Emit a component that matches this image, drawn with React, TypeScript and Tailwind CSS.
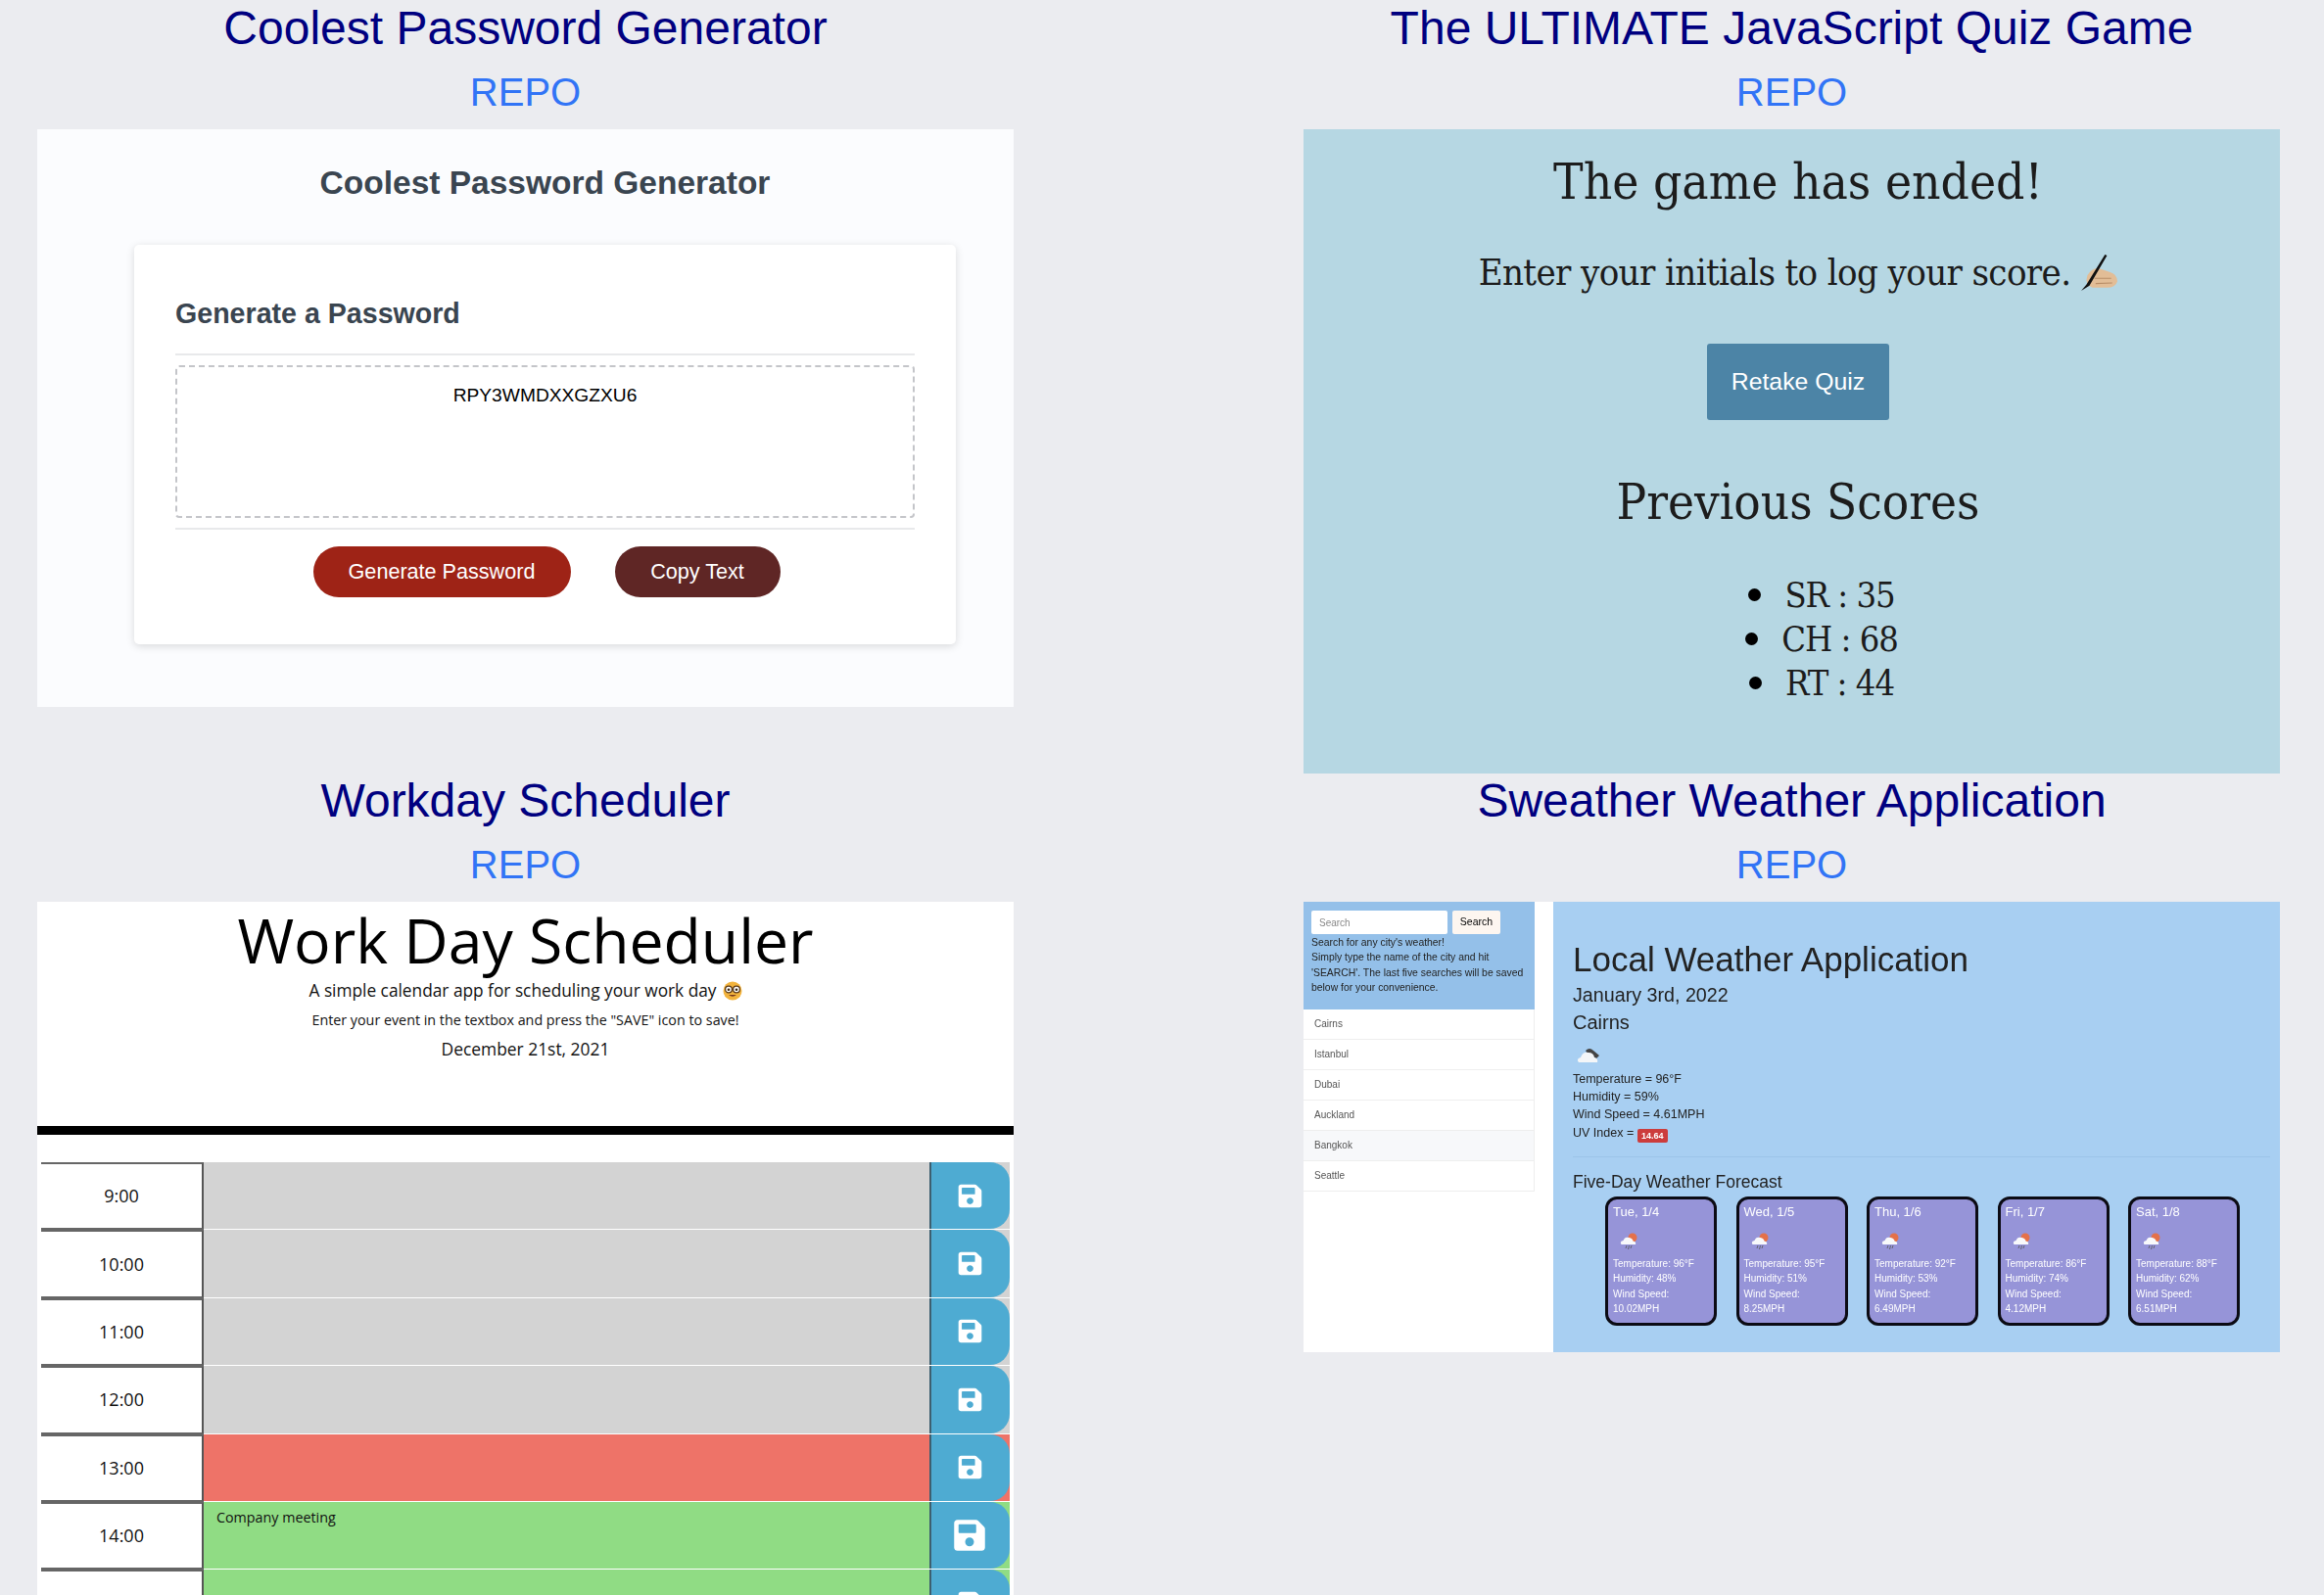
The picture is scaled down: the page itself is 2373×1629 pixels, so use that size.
import { FaSave } from 'react-icons/fa';

const SANS = "font-['Liberation_Sans',Arial,sans-serif]";

function Heading({ title }: { title: string }) {
  return (
    <>
      <h2 className="h-[55px] pt-[1px] text-center text-[48px] leading-[55px] text-[#000080]">{title}</h2>
      <a href="#" className="block h-[77px] pt-[15px] text-center text-[40px] leading-[48px] text-[#3174f6]">
        REPO
      </a>
    </>
  );
}

// ─── Password generator ───────────────────────────────────────────────────────

function PasswordPanel() {
  return (
    <div className="h-[590px] bg-[#fbfcfe] pl-[99px] pr-[59px] pt-[35px]">
      <h3 className="h-[40px] text-center text-[33.5px] font-bold leading-[40px] text-[#3a4550]">
        Coolest Password Generator
      </h3>
      <div className="mt-[43px] h-[408px] rounded-[5px] bg-white px-[42px] pt-[50px] shadow-[0_2px_8px_rgba(0,0,0,0.14)]">
        <h4 className="h-[40px] text-[28.6px] font-bold leading-[40px] text-[#3a4550]">Generate a Password</h4>
        <div className="mt-[21px] border-y-2 border-[#e8e9eb] py-[10px]">
          <div className="h-[156px] rounded-[4px] border-2 border-dashed border-[#c4c5c9] pt-[17px] text-center text-[19.2px] leading-[24px] text-black">
            RPY3WMDXXGZXU6
          </div>
        </div>
        <div className="mt-[17px] flex justify-center gap-[45px] pl-[3px]">
          <button className="h-[52px] w-[263px] rounded-[26px] bg-[#9e2316] text-[21.6px] text-white">
            Generate Password
          </button>
          <button className="h-[52px] w-[169px] rounded-[26px] bg-[#5f2625] text-[21.6px] text-white">Copy Text</button>
        </div>
      </div>
    </div>
  );
}

// ─── Quiz ─────────────────────────────────────────────────────────────────────

function WritingHand() {
  return (
    <svg viewBox="0 0 36 36" className="ml-[10px] h-[38px] w-[38px] shrink-0">
      <path d="M7 21 Q13 12 20 15 L29 18 Q36 20 36 27 Q34 33 26 33 L12 33 Q4 30 7 21 Z" fill="#e2bd96" />
      <path d="M14 24 L30 24 M15 29 L31 28.5" stroke="#b98e68" strokeWidth="1" fill="none" />
      <path d="M1 36 L6 30 L24 1 L26 2 L9 31 Z" fill="#111" />
    </svg>
  );
}

function QuizPanel() {
  const serif = "font-['DejaVu_Serif_Condensed','Liberation_Serif',serif]";
  return (
    <div className={`flex h-[658px] flex-col items-center bg-[#b6d7e3] pl-[13px] pt-[24px] text-[#1c1c1c] ${serif}`}>
      <h3 className="h-[60px] text-[51px] leading-[60px]">The game has ended!</h3>
      <p className="mt-[42px] flex h-[40px] items-center text-[38px] leading-[40px] tracking-[-0.63px]">
        Enter your initials to log your score.
        <WritingHand />
      </p>
      <button className={`mt-[53px] h-[78px] w-[186px] rounded-[3px] bg-[#4c84a6] text-[24.8px] text-white ${SANS}`}>
        Retake Quiz
      </button>
      <h3 className="mt-[56px] h-[56px] text-[50.7px] leading-[56px]">Previous Scores</h3>
      <ul className="ml-[48px] mt-[44px] text-[36px] leading-[45px] tracking-[-1px]">
        {['SR : 35', 'CH : 68', 'RT : 44'].map((s) => (
          <li key={s} className="flex items-center justify-center gap-[24px]">
            <span className="h-[13px] w-[13px] rounded-full bg-black" />
            {s}
          </li>
        ))}
      </ul>
    </div>
  );
}

// ─── Scheduler ────────────────────────────────────────────────────────────────

function NerdFace() {
  return (
    <svg viewBox="0 0 20 20" className="ml-[6px] inline h-[20px] w-[20px] align-[-4px]">
      <circle cx="10" cy="10" r="9.5" fill="#f2b33d" />
      <circle cx="6" cy="8.5" r="3.4" fill="#fff" stroke="#5a3a1a" strokeWidth="1.3" />
      <circle cx="14" cy="8.5" r="3.4" fill="#fff" stroke="#5a3a1a" strokeWidth="1.3" />
      <circle cx="6" cy="8.8" r="1.3" fill="#3a2510" />
      <circle cx="14" cy="8.8" r="1.3" fill="#3a2510" />
      <path d="M6 14 Q10 17.5 14 14 Z" fill="#7a3b1e" />
    </svg>
  );
}

type Hour = { label: string; tone: string; text?: string; big?: boolean };

const hours: Hour[] = [
  { label: '9:00', tone: 'bg-[#d3d3d3]' },
  { label: '10:00', tone: 'bg-[#d3d3d3]' },
  { label: '11:00', tone: 'bg-[#d3d3d3]' },
  { label: '12:00', tone: 'bg-[#d3d3d3]' },
  { label: '13:00', tone: 'bg-[#ee7368]' },
  { label: '14:00', tone: 'bg-[#90dc84]', text: 'Company meeting', big: true },
  { label: '15:00', tone: 'bg-[#90dc84]' },
];

function HourRow({ hour }: { hour: Hour }) {
  return (
    <div className="mx-[4px] flex h-[69.4px]">
      <div className="flex w-[166px] shrink-0 items-center justify-center border-y-2 border-r-2 border-y-[#666] border-r-[#555] bg-white text-[18px] text-[#111]">
        {hour.label}
      </div>
      <div className={`flex flex-1 border-b border-white ${hour.tone}`}>
        <div className="flex-1 pl-[13px] pt-[6px] text-[14.3px] leading-[19px] text-[#111]">{hour.text}</div>
        <button className="flex h-full w-[82px] shrink-0 items-center justify-center rounded-r-[20px] border-l-2 border-l-[#3d5f70] bg-[#4eabd2] pr-[2px] text-white">
          <FaSave className={hour.big ? 'text-[36px]' : 'text-[27px]'} />
        </button>
      </div>
    </div>
  );
}

function SchedulerPanel() {
  return (
    <div className="bg-white font-['Open_Sans',sans-serif] text-[#111]">
      <div className="h-[229px] text-center">
        <h3 className="h-[80px] text-[62.5px] leading-[78px] text-black">Work Day Scheduler</h3>
        <p className="mt-[1px] h-[20px] text-[17.3px] leading-[20px]">
          A simple calendar app for scheduling your work day
          <NerdFace />
        </p>
        <p className="mt-[10px] h-[20px] text-[14.3px] leading-[20px]">
          Enter your event in the textbox and press the "SAVE" icon to save!
        </p>
        <p className="mt-[9px] h-[20px] text-[17.4px] leading-[20px]">December 21st, 2021</p>
      </div>
      <div className="h-[9px] bg-black" />
      <div className="pt-[28px]">
        {hours.map((h) => (
          <HourRow key={h.label} hour={h} />
        ))}
      </div>
    </div>
  );
}

// ─── Weather ──────────────────────────────────────────────────────────────────

function DarkCloud() {
  return (
    <svg viewBox="0 0 24 16" className="ml-[4px] h-[16px] w-[24px]">
      <path d="M9 3 Q13 -1 17 3 L23 8 L20 11 L12 8 Z" fill="#444" />
      <path d="M2 15 Q-1 11 4 10 Q6 4 12 5 Q17 5 18 10 Q22 11 21 15 Z" fill="#f4f6f8" />
    </svg>
  );
}

function RainCloud() {
  return (
    <svg viewBox="0 0 18 18" className="ml-[7px] h-[18px] w-[18px]">
      <circle cx="13" cy="5" r="4.5" fill="#e4714a" />
      <path d="M1.5 12 Q-0.5 8.5 3.5 8 Q5 3.5 9.5 5 Q13 5.5 13.5 8.5 Q17 9 16 12 Z" fill="#f8f9fb" />
      <path d="M7 13 L6 16 M9.5 13 L8.5 17 M12 13 L11 16" stroke="#555" strokeWidth="0.8" />
    </svg>
  );
}

const cities = ['Cairns', 'Istanbul', 'Dubai', 'Auckland', 'Bangkok', 'Seattle'];

const forecast = [
  { day: 'Tue, 1/4', temp: 96, hum: 48, wind: '10.02' },
  { day: 'Wed, 1/5', temp: 95, hum: 51, wind: '8.25' },
  { day: 'Thu, 1/6', temp: 92, hum: 53, wind: '6.49' },
  { day: 'Fri, 1/7', temp: 86, hum: 74, wind: '4.12' },
  { day: 'Sat, 1/8', temp: 88, hum: 62, wind: '6.51' },
];

function WeatherPanel() {
  return (
    <div className="flex h-[460px] bg-white blur-[0.4px]">
      <aside className="w-[255px] shrink-0 pr-[19px]">
        <div className="h-[110px] bg-[#94c0e9] px-[8px] pt-[9px] text-[10.4px] leading-[15.3px] text-[#222]">
          <div className="flex gap-[5px]">
            <input
              placeholder="Search"
              className="h-[24px] w-[139px] rounded-[2px] bg-white px-[8px] text-[10px] outline-none placeholder:text-[#888]"
            />
            <button className="h-[24px] w-[49px] rounded-[2px] bg-[#fdf6f0] text-[10.5px] text-black">Search</button>
          </div>
          <p className="mt-[1px] w-[220px]">
            Search for any city's weather!
            <br />
            Simply type the name of the city and hit 'SEARCH'. The last five searches will be saved below for your
            convenience.
          </p>
        </div>
        <ul>
          {cities.map((c) => (
            <li
              key={c}
              className={`h-[31px] border-b border-r border-[#eeeeee] pl-[11px] text-[10px] leading-[30px] text-[#555] ${
                c === 'Bangkok' ? 'bg-[#f7f8fa]' : 'bg-white'
              }`}
            >
              {c}
            </li>
          ))}
        </ul>
      </aside>
      <main className="flex-1 bg-[#a8cff2] pl-[20px] pr-[10px] pt-[38px] text-[#222]">
        <h3 className="h-[42px] text-[35px] leading-[42px]">Local Weather Application</h3>
        <p className="mt-[3px] h-[25px] text-[19.7px] leading-[25px]">January 3rd, 2022</p>
        <p className="mt-[3px] h-[25px] text-[20px] leading-[25px]">Cairns</p>
        <div className="mt-[13px]">
          <DarkCloud />
        </div>
        <div className="mt-[7px] text-[12.5px] leading-[18.2px]">
          <p>Temperature = 96°F</p>
          <p>Humidity = 59%</p>
          <p>Wind Speed = 4.61MPH</p>
          <p>
            UV Index ={' '}
            <span className="inline-block h-[14px] w-[31px] rounded-[2px] bg-[#cc3c3c] text-center align-[-2px] text-[9px] font-bold leading-[14px] text-white">
              14.64
            </span>
          </p>
        </div>
        <hr className="mt-[14px] border-[#9cc4e8]" />
        <h4 className="mt-[15px] h-[20px] text-[17.5px] leading-[20px]">Five-Day Weather Forecast</h4>
        <div className="ml-[33px] mt-[5px] flex gap-[19.5px]">
          {forecast.map((f) => (
            <div
              key={f.day}
              className="h-[132px] w-[114px] rounded-[12px] border-[3px] border-[#0b0b14] bg-[#9694d8] pl-[5px] pt-[5px] text-[10px] leading-[15.3px] text-white"
            >
              <p className="text-[13px]">{f.day}</p>
              <div className="mt-[14px] h-[20px]">
                <RainCloud />
              </div>
              <p className="mt-[4px]">Temperature: {f.temp}°F</p>
              <p>Humidity: {f.hum}%</p>
              <p>Wind Speed:</p>
              <p>{f.wind}MPH</p>
            </div>
          ))}
        </div>
      </main>
    </div>
  );
}

export default function App() {
  return (
    <div className={`h-[1629px] overflow-hidden bg-[#ebecf0] pl-[38px] ${SANS}`}>
      <div className="grid grid-cols-[997px_997px] grid-rows-[789px_840px] gap-x-[296px]">
        <section>
          <Heading title="Coolest Password Generator" />
          <PasswordPanel />
        </section>
        <section>
          <Heading title="The ULTIMATE JavaScript Quiz Game" />
          <QuizPanel />
        </section>
        <section>
          <Heading title="Workday Scheduler" />
          <SchedulerPanel />
        </section>
        <section>
          <Heading title="Sweather Weather Application" />
          <WeatherPanel />
        </section>
      </div>
    </div>
  );
}
